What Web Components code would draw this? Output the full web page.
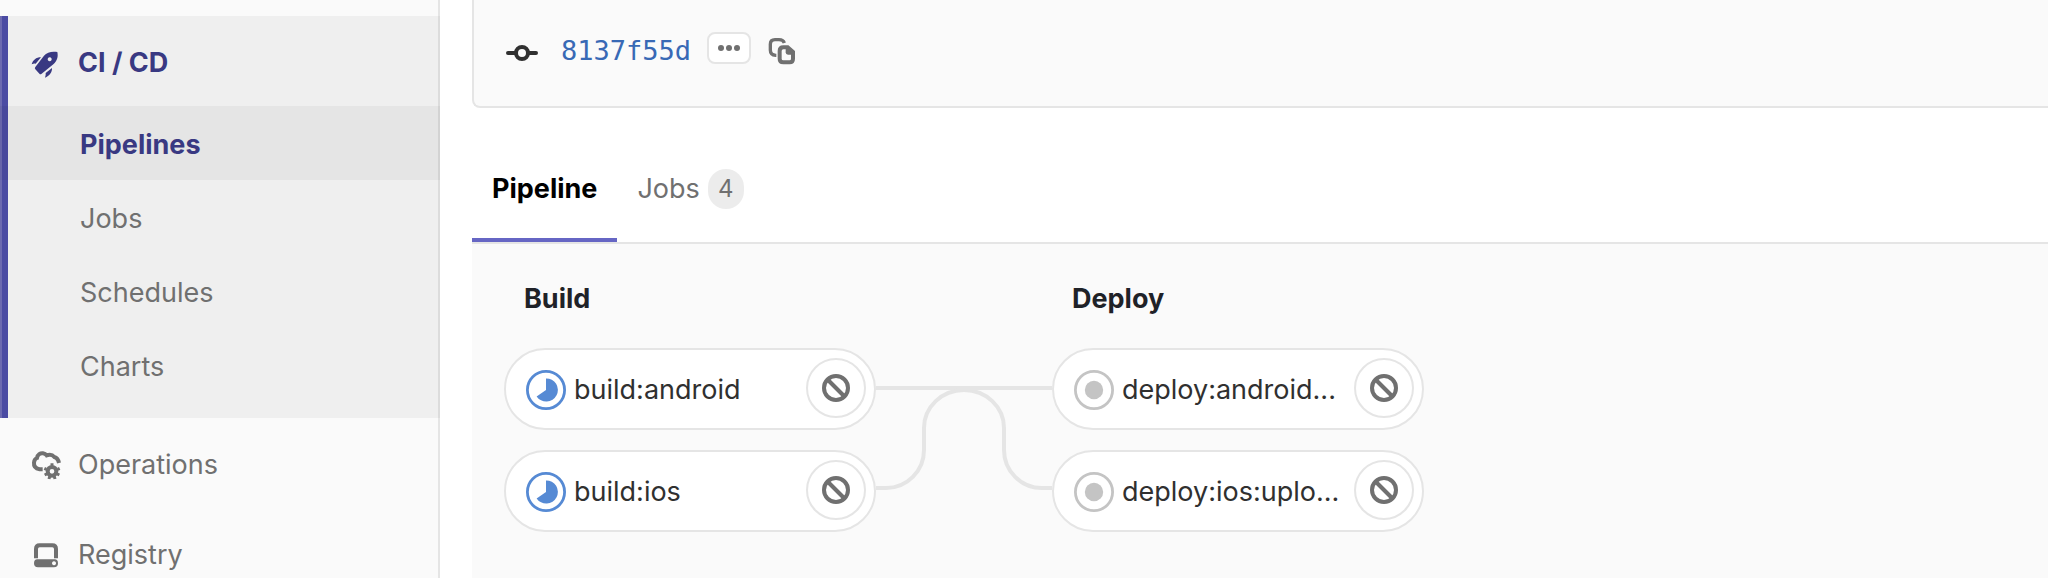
<!DOCTYPE html>
<html lang="en">
<head>
<meta charset="utf-8">
<title>Pipeline</title>
<style>
body { margin: 0; background: #fff; color: #303030; font: 27px/36px Inter, "Liberation Sans", sans-serif; }
</style>
</head>
<body>
<ci-app>
  <side-bar slot="sidebar">
    <side-group active>
      <side-item icon="rocket" active>CI / CD</side-item>
      <side-item sub active current>Pipelines</side-item>
      <side-item sub>Jobs</side-item>
      <side-item sub>Schedules</side-item>
      <side-item sub>Charts</side-item>
    </side-group>
    <side-item icon="operations">Operations</side-item>
    <side-item icon="registry">Registry</side-item>
  </side-bar>
  <commit-info sha="8137f55d"></commit-info>
  <tab-bar>
    <tab-link active>Pipeline</tab-link>
    <tab-link count="4">Jobs</tab-link>
  </tab-bar>
  <pipeline-graph>
    <pipeline-stage name="Build">
      <pipeline-job status="running">build:android</pipeline-job>
      <pipeline-job status="running">build:ios</pipeline-job>
    </pipeline-stage>
    <stage-link></stage-link>
    <pipeline-stage name="Deploy">
      <pipeline-job status="created">deploy:android...</pipeline-job>
      <pipeline-job status="created">deploy:ios:uplo...</pipeline-job>
    </pipeline-stage>
  </pipeline-graph>
</ci-app>
<script>
const ICONS = {
  rocket: `<svg viewBox="90 137 96 96" width="32" height="32" aria-hidden="true"><g fill="currentColor"><path fill-rule="evenodd" d="M172 152C157 149 141 152 132 163L106 197Q103 201 106 204L119 218Q121 220 125 217L160 189C172 178 175 166 172 152ZM149 168a6 6 0 1 0 .1 0Z"/><path d="M95 189C99 176 108 168 123 168L107 187Q101 186 95 189ZM135 229C148 224 157 213 156 200L137 215Q138 222 135 229Z"/></g></svg>`,
  operations: `<svg viewBox="90 503 96 96" width="32" height="32" aria-hidden="true"><path d="M128 564H119C107 562 101 555 102 544Q103 533 111 530C113 519 121 515 129 516Q136 517 140 522C149 519 158 521 163 527Q174 530 177 545" fill="none" stroke="currentColor" stroke-width="12"/><circle cx="156" cy="570" r="13" fill="none" stroke="currentColor" stroke-width="12"/><path d="M156 553v-7M139 564l-6-3M173 564l6-3M142 577l-8 4M170 577l8 4M149 585l-2 8M163 585l2 8" stroke="currentColor" stroke-width="9"/></svg>`,
  registry: `<svg viewBox="90 773 96 96" width="32" height="32" aria-hidden="true"><path d="M108 831V803Q108 792 119 792H157Q168 792 168 803V831" fill="none" stroke="currentColor" stroke-width="12"/><path fill="currentColor" fill-rule="evenodd" d="M112 834H164Q174 834 174 846T162 858H114Q102 858 102 846T112 834ZM162 840a6 6 0 1 0 .1 0Z"/></svg>`,
  commit: `<svg viewBox="0 0 32 32" width="32" height="32" aria-hidden="true"><g fill="none" stroke="currentColor" stroke-width="4"><circle cx="16" cy="16" r="6"/><path stroke-linecap="round" d="M2 16h7M23 16h7"/></g></svg>`,
  dots: `<svg viewBox="0 0 22 6" width="22" height="6" aria-hidden="true"><g fill="currentColor"><circle cx="3" cy="3" r="3"/><circle cx="11" cy="3" r="3"/><circle cx="19" cy="3" r="3"/></g></svg>`,
  copy: `<svg viewBox="837 51 84 84" width="28" height="28" aria-hidden="true"><g fill="none" stroke="currentColor" stroke-width="10"><path d="M862 106H860Q844 105 844 90V73Q844 59 858 59H870Q883 59 886 69"/><path stroke-width="12" d="M883 82H896L912 96V116Q912 127 902 127H883Q872 127 872 116V93Q872 82 883 82Z"/></g><path fill="currentColor" d="M890 82H899L912 94V104H897Q890 104 890 97Z"/></svg>`,
  cancel: `<svg viewBox="0 0 28 28" width="28" height="28" aria-hidden="true"><g fill="none" stroke="currentColor" stroke-width="4"><circle cx="14" cy="14" r="12"/><path d="M6 6l16 16"/></g></svg>`,
  running: `<svg viewBox="0 0 40 40" width="40" height="40" role="img" aria-label="running"><circle cx="20" cy="20" r="18.6" fill="#fff" stroke="#568ad4" stroke-width="2.8"/><path fill="#568ad4" d="M20 8.4A11.6 11.6 0 1 1 10.6 26.4L20 20Z"/></svg>`,
  created: `<svg viewBox="0 0 40 40" width="40" height="40" role="img" aria-label="created"><circle cx="20" cy="20" r="18.6" fill="#fff" stroke="#c4c4c4" stroke-width="2.8"/><circle cx="20" cy="20" r="9.2" fill="#c4c4c4"/></svg>`
};

function define(name, render) {
  customElements.define(name, class extends HTMLElement {
    constructor() {
      super();
      this.attachShadow({ mode: "open" });
    }
    connectedCallback() {
      this.shadowRoot.innerHTML = `<style>*{box-sizing:border-box} svg{display:block;flex:none}</style>` + render(this);
    }
  });
}

define("ci-app", () => `<style>
  :host { display: flex; height: 100vh; overflow: hidden; }
  main { flex: 1; min-width: 0; padding-left: 32px; display: flex; flex-direction: column; }
</style><slot name="sidebar"></slot><main><slot></slot></main>`);

define("side-bar", () => `<style>
  :host { display: block; flex: none; width: 440px; box-sizing: border-box; padding-top: 16px; background: #fafafa; box-shadow: inset -2px 0 #e5e5e5; color: #707070; }
</style><nav aria-label="Project"><slot></slot></nav>`);

define("side-group", () => `<style>
  :host { display: block; padding-bottom: 16px; background: #efefef; box-shadow: inset 2px 0 #6c6ab0, inset 8px 0 #4b4ba3, inset -2px 0 #dcdcdc; }
</style><slot></slot>`);

define("side-item", el => `<style>
  :host { display: block; }
  :host([active]) { color: #393982; font-weight: 700; }
  :host([current]) { background: rgba(0, 0, 0, .04); }
  a { display: flex; align-items: center; gap: 16px; height: 90px; padding: 4px 32px 0 30px; color: inherit; text-decoration: none; }
  :host([sub]) a { height: 74px; padding-left: 80px; }
</style><a href="#">${ICONS[el.getAttribute("icon")] || ""}<span><slot></slot></span></a>`);

define("commit-info", el => `<style>
  :host { display: flex; flex: none; align-items: center; box-sizing: border-box; height: 108px; padding: 0 32px 10px; background: #fafafa; border: solid #e5e5e5; border-width: 0 0 2px 2px; border-bottom-left-radius: 8px; color: #303030; }
  svg { margin-top: 10px; }
  a { margin: 6px 16px 0 23px; color: #3869b5; font-family: "DejaVu Sans Mono", monospace; text-decoration: none; }
  button { display: flex; align-items: center; justify-content: center; padding: 0; background: #fff; color: #707070; border: 0; }
  button svg { margin: 0; }
  .more { width: 44px; height: 32px; border: 2px solid #e5e5e5; border-radius: 8px; }
  .copy { margin: 6px 0 0 17px; background: none; }
</style>${ICONS.commit}<a href="#">${el.getAttribute("sha")}</a>
<button class="more" type="button" aria-label="Toggle commit description">${ICONS.dots}</button>
<button class="copy" type="button" aria-label="Copy commit SHA">${ICONS.copy}</button>`);

define("tab-bar", () => `<style>
  :host { display: block; flex: none; padding-top: 28px; border-bottom: 2px solid #e5e5e5; }
  nav { display: flex; }
</style><nav aria-label="Pipeline views"><slot></slot></nav>`);

define("tab-link", el => `<style>
  :host { display: block; color: #707070; }
  a { display: flex; align-items: center; gap: 8px; height: 106px; padding: 4px 20px 0; color: inherit; text-decoration: none; border-bottom: 4px solid transparent; }
  :host([active]) { color: #000; font-weight: 700; }
  :host([active]) a { border-color: #6666c4; }
  .count { min-width: 36px; padding: 2px 10px; border-radius: 20px; background: #ececec; font-size: 24px; text-align: center; }
</style><a href="#"><span><slot></slot></span>${el.hasAttribute("count") ? `<span class="count">${el.getAttribute("count")}</span>` : ""}</a>`);

define("pipeline-graph", () => `<style>
  :host { display: flex; flex: 1; align-items: flex-start; padding: 37px 32px; background: #fafafa; }
</style><slot></slot>`);

define("pipeline-stage", el => `<style>
  :host { display: flex; flex: none; flex-direction: column; gap: 20px; width: 372px; }
  h2 { margin: 0 0 11px; padding-left: 20px; color: #1f2228; font-size: 27px; font-weight: 700; line-height: 36px; }
</style><h2>${el.getAttribute("name")}</h2><slot></slot>`);

define("pipeline-job", el => `<style>
  :host { display: flex; align-items: center; box-sizing: border-box; height: 82px; padding: 0 8px 0 20px; background: #fff; border: 2px solid #e5e5e5; border-radius: 41px; }
  a { display: flex; flex: 1; min-width: 0; align-items: center; gap: 8px; padding-top: 2px; color: #303030; text-decoration: none; white-space: nowrap; }
  button { display: flex; flex: none; align-items: center; justify-content: center; width: 60px; height: 60px; margin-bottom: 2px; padding: 0; background: #fff; color: #707070; border: 2px solid #e5e5e5; border-radius: 50%; }
</style><a href="#">${ICONS[el.getAttribute("status")]}<span><slot></slot></span></a>
<button type="button" aria-label="Cancel">${ICONS.cancel}</button>`);

define("stage-link", () => `<style>
  :host { display: block; flex: none; width: 176px; padding-top: 67px; }
</style><svg viewBox="876 348 176 184" width="176" height="184" aria-hidden="true"><g fill="none" stroke="#e5e5e5" stroke-width="4"><path d="M876 388H1052"/><path d="M876 488H886A38 38 0 0 0 924 450V428A40 38 0 0 1 964 390A40 38 0 0 1 1004 428V450A38 38 0 0 0 1042 488H1052"/></g></svg>`);
</script>
</body>
</html>
